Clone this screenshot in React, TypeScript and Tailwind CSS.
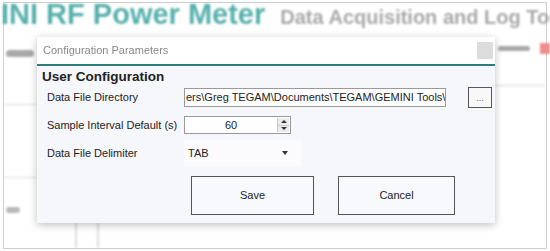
function Spinner() {
  return (
    <div className="flex flex-col w-[12px] h-full border-l border-[#c8c8c8]">
      <div className="flex-1 flex items-center justify-center bg-[#ececec] border-b border-[#c8c8c8]">
        <div className="w-0 h-0 border-l-[3px] border-r-[3px] border-b-[3px] border-l-transparent border-r-transparent border-b-[#333]" />
      </div>
      <div className="flex-1 flex items-center justify-center bg-[#ececec]">
        <div className="w-0 h-0 border-l-[3px] border-r-[3px] border-t-[3px] border-l-transparent border-r-transparent border-t-[#333]" />
      </div>
    </div>
  );
}

export default function App() {
  return (
    <div
      className="relative w-[550px] h-[251px] bg-white overflow-hidden text-[#222]"
      style={{ fontFamily: '"Liberation Sans", Arial, sans-serif' }}
    >
      {/* app behind the dialog */}
      <div className="absolute left-[3px] top-[2px] w-[544px] h-[247px] border border-[#cfcfcf]" />
      <div className="flex items-baseline h-[28px] whitespace-nowrap blur-[0.8px]">
        <span className="ml-[1px] text-[29px] leading-[28px] font-bold text-[#56b0ab]">
          INI RF Power Meter
        </span>
        <span className="ml-[15px] text-[20px] leading-[28px] font-bold text-[#a8a8a8]">
          Data Acquisition and Log Tool
        </span>
      </div>
      <div className="absolute inset-0 blur-[1px]">
        <div className="absolute left-[6px] top-[50px] w-[28px] h-[7px] bg-[#a8a8a8] rounded-sm" />
        <div className="absolute left-[4px] top-[104px] w-[33px] h-[1px] bg-[#dcdcdc]" />
        <div className="absolute left-[4px] top-[177px] w-[33px] h-[1px] bg-[#dcdcdc]" />
        <div className="absolute left-[6px] top-[207px] w-[14px] h-[6px] bg-[#b8b8b8] rounded-sm" />
        <div className="absolute left-[498px] top-[46px] w-[32px] h-[5px] bg-[#a8a8a8] rounded-sm" />
        <div className="absolute left-[540px] top-[43px] w-[10px] h-[11px] bg-[#f08c8c]" />
        <div className="absolute left-[495px] top-[85px] w-[51px] h-[1px] bg-[#d8d8d8]" />
        <div className="absolute left-[75px] top-[222px] w-[2px] h-[26px] bg-[#dedede]" />
        <div className="absolute left-[97px] top-[222px] w-[2px] h-[26px] bg-[#dedede]" />
      </div>

      {/* dialog */}
      <div className="absolute left-[37px] top-[37px] w-[458px] h-[186px] bg-[#f6f7fb] shadow-[0_2px_8px_rgba(0,0,0,0.25)] flex flex-col">
        <div className="h-[27px] bg-white flex items-center justify-between pl-[6px] pr-[2px] shrink-0">
          <span className="text-[11px] text-[#8a8a8a] blur-[0.3px]">Configuration Parameters</span>
          <div className="w-[16px] h-[17px] bg-[#dcdcdc]" />
        </div>
        <div className="h-[2px] bg-[#2b7f7a] shrink-0" />
        <div className="pl-[5px] pt-[2px] text-[13.5px] font-bold leading-[17px]">User Configuration</div>

        <div className="flex items-center h-[22px] mt-[1px] pl-[10px]">
          <span className="w-[137px] text-[11px]">Data File Directory</span>
          <div className="w-[262px] h-[19px] bg-white border border-[#9a9a9a] flex items-center pl-[1px] overflow-hidden whitespace-nowrap text-[11px]">
            ers\Greg TEGAM\Documents\TEGAM\GEMINI Tools\
          </div>
          <div className="ml-[22px] w-[24px] h-[21px] border border-[#555] bg-[#f8f8f8] flex items-end justify-center pb-[4px] text-[9px] leading-none text-[#666]">
            ...
          </div>
        </div>

        <div className="flex items-center h-[18px] mt-[8px] pl-[10px]">
          <span className="w-[137px] text-[11px]">Sample Interval Default (s)</span>
          <div className="w-[107px] h-[18px] bg-white border border-[#9a9a9a] flex items-stretch">
            <span className="flex-1 text-center text-[11px] leading-[16px]">60</span>
            <div className="py-[1px] pr-[1px]">
              <Spinner />
            </div>
          </div>
        </div>

        <div className="flex items-center h-[26px] mt-[6px] pl-[10px]">
          <span className="w-[137px] text-[11px] self-start pt-[5px]">Data File Delimiter</span>
          <div className="w-[117px] h-[26px] bg-[#fbfbfd] flex items-center justify-between pl-[4px] pr-[13px]">
            <span className="text-[11px]">TAB</span>
            <div className="w-0 h-0 border-l-[3px] border-r-[3px] border-t-[4px] border-l-transparent border-r-transparent border-t-[#333]" />
          </div>
        </div>

        <div className="flex gap-[24px] mt-[10px] pl-[154px]">
          <button className="w-[123px] h-[39px] border border-[#555] bg-[#f8f9fc] text-[11px]">Save</button>
          <button className="w-[117px] h-[39px] border border-[#555] bg-[#f8f9fc] text-[11px]">Cancel</button>
        </div>
      </div>
    </div>
  );
}
